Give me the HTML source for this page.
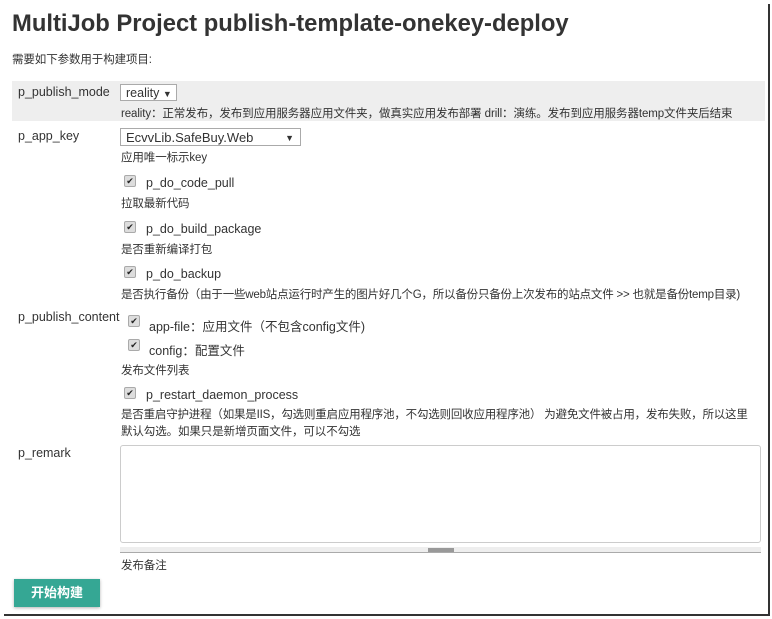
<!DOCTYPE html>
<html><head><meta charset="utf-8"><style>
body{margin:0;width:772px;height:619px;background:#fff;position:relative;overflow:hidden;font-family:"Liberation Sans","Noto Sans CJK SC",sans-serif;color:#333}
.a{position:absolute;white-space:nowrap}
.l{font-size:12.5px;color:#333}
.d{font-size:11.5px;color:#333;letter-spacing:-0.1px}
.cb{position:absolute;width:10px;height:10px;background:#ddd;border:1px solid #aaa;border-radius:2px;font-size:9px;line-height:10px;text-align:center;color:#222}
</style></head><body>
<div style="position:absolute;left:768px;top:4px;width:2px;height:612px;background:#333"></div>
<div style="position:absolute;left:4px;top:614px;width:766px;height:2px;background:#333"></div>
<div class="a" style="left:12px;top:10px;font-size:23.8px;font-weight:bold;color:#333">MultiJob Project publish-template-onekey-deploy</div>
<div class="a d" style="left:12px;top:51px">需要如下参数用于构建项目:</div>
<div style="position:absolute;left:12px;top:81px;width:753px;height:40px;background:#eee"></div>
<div class="a l" style="left:18px;top:85px">p_publish_mode</div>
<div style="position:absolute;left:120px;top:84px;height:17px;border:1px solid #aaa;background:#fff;font-size:12.5px;line-height:17px;padding-left:5px;box-sizing:border-box;width:57px">reality <span style="font-size:9px">▼</span></div>
<div class="a d" style="left:121px;top:105px">reality：正常发布，发布到应用服务器应用文件夹，做真实应用发布部署 drill：演练。发布到应用服务器temp文件夹后结束</div>
<div class="a l" style="left:18px;top:129px">p_app_key</div>
<div style="position:absolute;left:120px;top:128px;width:181px;height:18px;border:1px solid #aaa;background:#fff;font-size:13px;line-height:18px;padding-left:5px;box-sizing:border-box">EcvvLib.SafeBuy.Web<span style="position:absolute;right:6px;font-size:9px">▼</span></div>
<div class="a d" style="left:121px;top:149px">应用唯一标示key</div>
<div class="cb" style="left:124px;top:175px">✔</div><div class="a l" style="left:146px;top:176px">p_do_code_pull</div>
<div class="a d" style="left:121px;top:195px">拉取最新代码</div>
<div class="cb" style="left:124px;top:221px">✔</div><div class="a l" style="left:146px;top:222px">p_do_build_package</div>
<div class="a d" style="left:121px;top:241px">是否重新编译打包</div>
<div class="cb" style="left:124px;top:266px">✔</div><div class="a l" style="left:146px;top:267px">p_do_backup</div>
<div class="a d" style="left:121px;top:286px;letter-spacing:-0.2px">是否执行备份（由于一些web站点运行时产生的图片好几个G，所以备份只备份上次发布的站点文件 &gt;&gt; 也就是备份temp目录)</div>
<div class="a l" style="left:18px;top:310px">p_publish_content</div>
<div class="cb" style="left:128px;top:315px">✔</div><div class="a l" style="left:149px;top:316px">app-file：应用文件（不包含config文件)</div>
<div class="cb" style="left:128px;top:339px">✔</div><div class="a l" style="left:149px;top:340px">config：配置文件</div>
<div class="a d" style="left:121px;top:362px">发布文件列表</div>
<div class="cb" style="left:124px;top:387px">✔</div><div class="a l" style="left:146px;top:388px">p_restart_daemon_process</div>
<div class="a d" style="left:121px;top:406px;letter-spacing:-0.2px">是否重启守护进程（如果是IIS，勾选则重启应用程序池，不勾选则回收应用程序池） 为避免文件被占用，发布失败，所以这里</div>
<div class="a d" style="left:121px;top:423px">默认勾选。如果只是新增页面文件，可以不勾选</div>
<div class="a l" style="left:18px;top:446px">p_remark</div>
<div style="position:absolute;left:120px;top:445px;width:641px;height:98px;border:1px solid #ccc;border-radius:3px;box-sizing:border-box"></div>
<div style="position:absolute;left:120px;top:547px;width:641px;height:5px;background:#eee;border-bottom:1px solid #aaa"></div>
<div style="position:absolute;left:428px;top:548px;width:26px;height:4px;background:#999"></div>
<div class="a d" style="left:121px;top:557px">发布备注</div>
<div style="position:absolute;left:14px;top:579px;width:86px;height:28px;background:#35a794;box-shadow:0 1px 3px rgba(0,0,0,.3);color:#fff;font-size:13px;font-weight:bold;text-align:center;line-height:28px">开始构建</div>
</body></html>
